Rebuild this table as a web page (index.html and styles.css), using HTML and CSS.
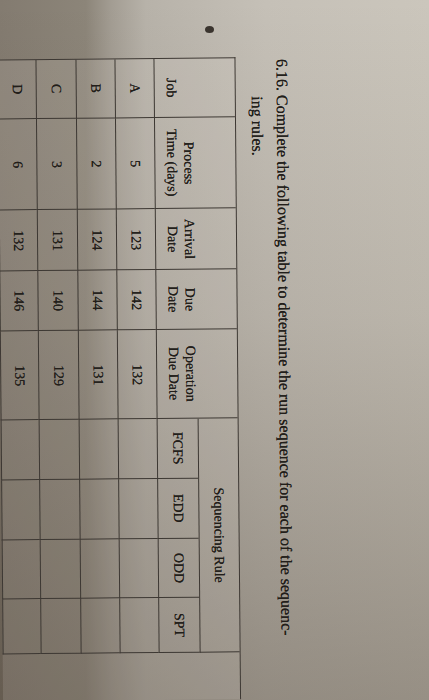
FILE: index.html
```html
<!DOCTYPE html>
<html>
<head>
<meta charset="utf-8">
<link rel="stylesheet" href="styles.css">
</head>
<body>
<div class="page">
  <p class="title">6.16. Complete the following table to determine the run sequence for each of the sequenc-<br>ing rules.</p>
  <div class="grid">
    <div class="cell head c1">Job</div>
    <div class="cell head c2">Process<br>Time (days)</div>
    <div class="cell head c3">Arrival<br>Date</div>
    <div class="cell head c4">Due<br>Date</div>
    <div class="cell head c5">Operation<br>Due Date</div>
    <div class="cell rule">Sequencing Rule</div>
    <div class="cell sub c6">FCFS</div>
    <div class="cell sub c7">EDD</div>
    <div class="cell sub c8">ODD</div>
    <div class="cell sub c9">SPT</div>

    <div class="cell">A</div><div class="cell">5</div><div class="cell">123</div><div class="cell">142</div><div class="cell">132</div><div class="cell"></div><div class="cell"></div><div class="cell"></div><div class="cell"></div>
    <div class="cell">B</div><div class="cell">2</div><div class="cell">124</div><div class="cell">144</div><div class="cell">131</div><div class="cell"></div><div class="cell"></div><div class="cell"></div><div class="cell"></div>
    <div class="cell">C</div><div class="cell">3</div><div class="cell">131</div><div class="cell">140</div><div class="cell">129</div><div class="cell"></div><div class="cell"></div><div class="cell"></div><div class="cell"></div>
    <div class="cell">D</div><div class="cell">6</div><div class="cell">132</div><div class="cell">146</div><div class="cell">135</div><div class="cell"></div><div class="cell"></div><div class="cell"></div><div class="cell"></div>
  </div>
</div>
<span class="dot"></span>
</body>
</html>
```
FILE: styles.css
```css
html, body {
  margin: 0;
  padding: 0;
}
body {
  width: 429px;
  height: 700px;
  overflow: hidden;
  position: relative;
  font-family: "Liberation Serif", "Times New Roman", serif;
  color: #221e1a;
  background:
    linear-gradient(to bottom, rgba(40, 28, 15, 0) 0%, rgba(40, 28, 15, 0.1) 45%, rgba(40, 28, 15, 0.32) 100%),
    linear-gradient(to right, #837b70 0%, #8c8579 20%, #a39d93 26%, #b7b2a9 34%, #c5c0b7 62%, #cbc6bc 100%);
}
.page {
  writing-mode: vertical-rl;
  height: 700px;
  box-sizing: border-box;
  padding: 60px 22px 0 0;
  transform: rotate(-0.5deg);
  transform-origin: 50% 50%;
}
.title {
  margin: 0;
  font-size: 16px;
  line-height: 25px;
  padding-inline-start: 37px;
  text-indent: -37px;
  text-shadow: 0 0 0.4px #221e1a;
}
.grid {
  margin-block-start: 9px;
  margin-inline-start: -2px;
  display: grid;
  grid-template-columns: 59px 91px 61px 60px 89px 60px 60px 59px 55px;
  grid-template-rows: 40px 41px 39px 39px 40px 38px;
  border-block-start: 1px solid #3d3833;
  border-inline-start: 1px solid #3d3833;
  font-size: 14px;
  line-height: 17px;
  background: rgba(228, 223, 213, 0.14);
}
.cell {
  border-block-end: 1px solid #3d3833;
  border-inline-end: 1px solid #3d3833;
  display: flex;
  justify-content: center;
  align-items: center;
  text-align: center;
  text-shadow: 0 0 0.3px #221e1a;
}
.head {
  grid-row: 1 / 3;
  align-items: flex-end;
  padding-block-end: 8px;
}
.c1 { grid-column: 1; }
.c2 { grid-column: 2; }
.c3 { grid-column: 3; }
.c4 { grid-column: 4; }
.c5 { grid-column: 5; }
.rule { grid-column: 6 / 10; grid-row: 1; }
.sub { grid-row: 2; }
.c6 { grid-column: 6; }
.c7 { grid-column: 7; }
.c8 { grid-column: 8; }
.c9 { grid-column: 9; }
.dot {
  position: absolute;
  left: 205px;
  top: 26px;
  width: 9px;
  height: 7px;
  border-radius: 50%;
  background: #3a342e;
}
```
